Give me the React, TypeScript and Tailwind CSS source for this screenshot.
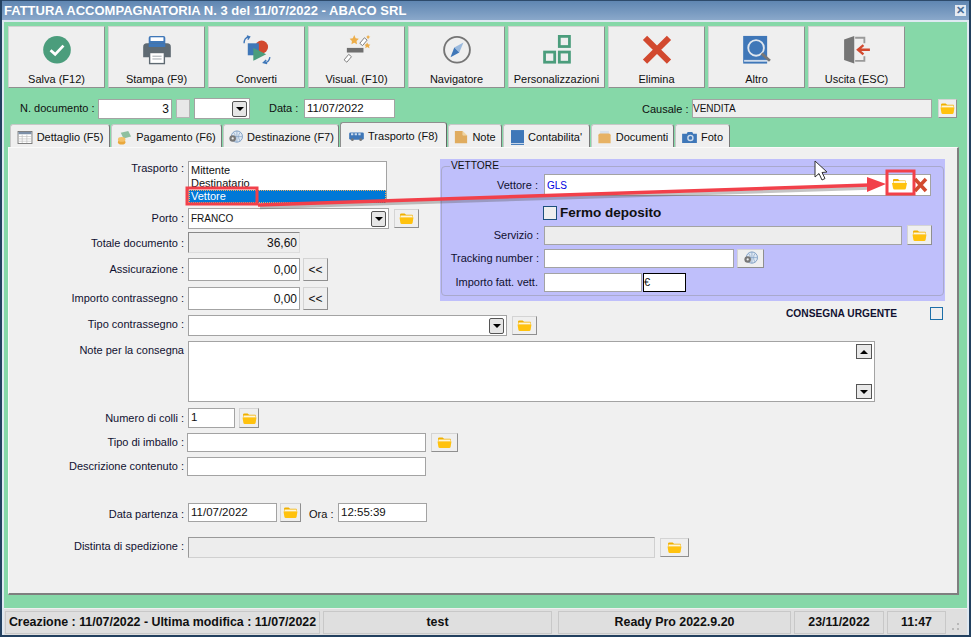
import React from 'react';

const Folder = ({ className = '' }: { className?: string }) => (
  <svg viewBox="0 0 16 14" className={`w-[15px] h-[13px] ${className}`}>
    <path d="M1 3 Q1 1.5 2.5 1.5 H6 L7.5 3 H14 Q15 3 15 4.5 V6 H1 Z" fill="#f0b000" />
    <path d="M1.5 3.8 H14.5 V6 H1.5 Z" fill="#fff6d8" />
    <path d="M.5 6 H15.5 L14.6 11.5 Q14.4 13 13 13 H3 Q1.6 13 1.4 11.5 Z" fill="#ffc20e" />
  </svg>
);

const FolderButton = ({ className = 'w-[25px] h-[19px]' }: { className?: string }) => (
  <button className={`flex items-center justify-center shrink-0 bg-[#efefef] border border-[#d4d4d4] border-r-[#8f8f8f] border-b-[#8f8f8f] ${className}`}>
    <Folder />
  </button>
);

const Field = ({ className = '', children }: { className?: string; children?: React.ReactNode }) => (
  <div className={`flex items-center px-[2px] bg-white border border-[#a3a3a3] overflow-hidden ${className}`}>{children}</div>
);

const ComboArrow = () => (
  <span className="ml-auto flex items-center justify-center w-[15px] h-[16px] shrink-0 rounded-[2px] bg-[#e6e6e6] border border-[#555]">
    <span className="w-0 h-0 border-x-[4px] border-x-transparent border-t-[4px] border-t-black" />
  </span>
);

const Row = ({ label, className = '', labelClass = '', children }: { label: string; className?: string; labelClass?: string; children?: React.ReactNode }) => (
  <div className={`flex items-center ${className}`}>
    <span className={`w-[176px] shrink-0 text-right text-[#101030] pr-[1px] whitespace-nowrap ${labelClass}`}>{label}</span>
    <div className="ml-[3px] flex items-center">{children}</div>
  </div>
);

const MoreButton = () => (
  <button className="ml-[3px] w-[25px] h-[23px] bg-[#efefef] border border-[#d4d4d4] border-r-[#8f8f8f] border-b-[#8f8f8f] text-[12px]">&lt;&lt;</button>
);

const toolbar: { label: string; icon: React.ReactNode }[] = [
  {
    label: 'Salva (F12)',
    icon: (
      <svg viewBox="0 0 32 32" className="w-[32px] h-[32px]">
        <circle cx="16" cy="16" r="15" fill="#4b9d7c" />
        <path d="M9 16.5 L14 21 L23 11.5" fill="none" stroke="#fff" strokeWidth="3" />
      </svg>
    ),
  },
  {
    label: 'Stampa (F9)',
    icon: (
      <svg viewBox="0 0 32 32" className="w-[32px] h-[32px]">
        <path d="M7 11 V3 Q7 1 9 1 H23 Q25 1 25 3 V11 Z" fill="#3f77b8" />
        <rect x="9" y="2.5" width="14" height="4" fill="#fff" />
        <path d="M1 13 Q1 9 5 9 H27 Q31 9 31 13 V24 H1 Z" fill="#5f6a72" />
        <rect x="7" y="9" width="18" height="4" fill="#3f77b8" />
        <rect x="8" y="19" width="16" height="12" fill="#fff" stroke="#5f6a72" strokeWidth="1.5" />
        <path d="M11 23 H21 M11 26 H21" stroke="#9aa2a8" strokeWidth="1" />
      </svg>
    ),
  },
  {
    label: 'Converti',
    icon: (
      <svg viewBox="0 0 32 32" className="w-[32px] h-[32px]">
        <circle cx="21" cy="13" r="7" fill="#d2492f" />
        <rect x="6" y="9" width="12" height="13" fill="#3f77b8" />
        <path d="M12 14 L26 21 L12 28 Z" fill="#4b9d7c" />
        <path d="M2 9 Q2 3 7 2 M5 1 L8 2 L6 5" fill="none" stroke="#3f77b8" strokeWidth="1.5" />
        <path d="M30 24 Q29 30 24 30 M26 27 L23 30 L27 31" fill="none" stroke="#3f77b8" strokeWidth="1.5" />
      </svg>
    ),
  },
  {
    label: 'Visual. (F10)',
    icon: (
      <svg viewBox="0 0 32 32" className="w-[32px] h-[32px]">
        <rect x="5" y="14" width="18" height="5" fill="#6f6f6f" />
        <path d="M19 9 L24 3 L27 5.5 L22 11.5 Z M2 27 L7 21 L10 23.5 L5 29.5 Z" fill="#fff" stroke="#777" strokeWidth="1" />
        <path d="M13 0 L14.5 3.5 L18 4 L15.5 6.5 L16 10 L13 8.5 L10 10 L10.5 6.5 L8 4 L11.5 3.5 Z" fill="#edae4a" />
        <path d="M27 8 L28 10 L30.5 10.5 L29 12 L29.5 14.5 L27 13 L25 14.5 L25.5 12 L24 10.5 L26 10 Z" fill="#edae4a" />
        <path d="M28 0 L29 1.5 L30.5 2 L29 3 L28 4.5 L27 3 L26 2 L27 1.5 Z" fill="#edae4a" />
      </svg>
    ),
  },
  {
    label: 'Navigatore',
    icon: (
      <svg viewBox="0 0 32 32" className="w-[32px] h-[32px]">
        <circle cx="16" cy="16" r="14" fill="none" stroke="#757575" strokeWidth="2" />
        <path d="M23 8 L18.5 19 L13 13.5 Z" fill="#9ab9dd" />
        <path d="M9 24 L13 13.5 L18.5 19 Z" fill="#3f77b8" />
      </svg>
    ),
  },
  {
    label: 'Personalizzazioni',
    icon: (
      <svg viewBox="0 0 32 32" className="w-[32px] h-[32px]" fill="none" stroke="#4b9d7c" strokeWidth="3">
        <rect x="18.5" y="1.5" width="11" height="11" />
        <rect x="2.5" y="18.5" width="11" height="11" />
        <rect x="18.5" y="18.5" width="11" height="11" />
      </svg>
    ),
  },
  {
    label: 'Elimina',
    icon: (
      <svg viewBox="0 0 32 32" className="w-[32px] h-[32px]">
        <path d="M3 3 L29 29 M29 3 L3 29" stroke="#d2492f" strokeWidth="6.5" />
      </svg>
    ),
  },
  {
    label: 'Altro',
    icon: (
      <svg viewBox="0 0 32 32" className="w-[32px] h-[32px]">
        <rect x="1" y="1" width="26" height="30" fill="#3f77b8" />
        <rect x="2" y="27" width="25" height="2" fill="#cfdcec" />
        <circle cx="15" cy="14" r="8.5" fill="#3f77b8" stroke="#dfe6ee" strokeWidth="2" />
        <path d="M21 20 L30 28" stroke="#777" strokeWidth="3" />
      </svg>
    ),
  },
  {
    label: 'Uscita (ESC)',
    icon: (
      <svg viewBox="0 0 32 32" className="w-[32px] h-[32px]">
        <path d="M14 3 H24 V9 M24 23 V28 H14" fill="none" stroke="#9a9a9a" strokeWidth="2" />
        <path d="M2 5 L13 1 V31 L2 27 Z" fill="#757575" />
        <path d="M30 16 H17 M23 11 L17 16 L23 21" fill="none" stroke="#d2492f" strokeWidth="2.5" />
      </svg>
    ),
  },
];

const Globe = () => (
  <svg viewBox="0 0 16 16" className="w-[15px] h-[15px]">
    <circle cx="9.5" cy="7" r="6" fill="#dfe8f2" stroke="#7f9fc4" />
    <path d="M3.5 7 H15.5 M9.5 1 V13 M6 2.5 Q9.5 7 6 12 M13 2.5 Q9.5 7 13 12" stroke="#7f9fc4" strokeWidth=".7" fill="none" />
    <circle cx="5" cy="9" r="3.5" fill="#777" />
    <circle cx="5" cy="9" r="1.2" fill="#eee" />
  </svg>
);

const tabs: { label: string; width: string; active?: boolean; icon: React.ReactNode }[] = [
  {
    label: 'Dettaglio (F5)',
    width: 'w-[100px]',
    icon: (
      <svg viewBox="0 0 16 14" className="w-[16px] h-[13px]">
        <rect x=".5" y=".5" width="15" height="13" fill="#fff" stroke="#777" />
        <rect x="1" y="1" width="14" height="2.5" fill="#7c8fa8" />
        <path d="M1 6 H15 M1 8.5 H15 M1 11 H15 M5 4 V13 M10 4 V13" stroke="#bbb" strokeWidth=".7" />
      </svg>
    ),
  },
  {
    label: 'Pagamento (F6)',
    width: 'w-[111px]',
    icon: (
      <svg viewBox="0 0 16 16" className="w-[15px] h-[15px]">
        <path d="M4 3 L12 1 L15 7 L7 9 Z" fill="#8fbf9f" />
        <ellipse cx="5" cy="13" rx="4" ry="2.5" fill="#eaa83c" />
        <ellipse cx="5" cy="10" rx="4" ry="2.5" fill="#f3c169" />
      </svg>
    ),
  },
  {
    label: 'Destinazione (F7)',
    width: 'w-[116px]',
    icon: <Globe />,
  },
  {
    label: 'Trasporto (F8)',
    width: 'w-[107px]',
    active: true,
    icon: (
      <svg viewBox="0 0 16 12" className="w-[15px] h-[11px]">
        <rect x="0" y="1.5" width="16" height="8" rx="1.5" fill="#3f77b8" />
        <path d="M2 3.5 H4.5 M6 3.5 H8.5 M10 3.5 H12.5" stroke="#cfdcec" strokeWidth="2" />
        <circle cx="3.5" cy="9.5" r="1.5" fill="#777" />
        <circle cx="12.5" cy="9.5" r="1.5" fill="#777" />
      </svg>
    ),
  },
  {
    label: 'Note',
    width: 'w-[54px]',
    icon: (
      <svg viewBox="0 0 16 16" className="w-[14px] h-[14px]">
        <path d="M1 1 H10 V6 H15 V15 H1 Z" fill="#e0ac5f" />
        <path d="M10 1 L15 6 H10 Z" fill="#f0d4a0" />
      </svg>
    ),
  },
  {
    label: "Contabilita'",
    width: 'w-[87px]',
    icon: (
      <svg viewBox="0 0 14 16" className="w-[13px] h-[15px]">
        <rect x="0" y="0" width="14" height="16" fill="#3f77b8" />
        <rect x="0" y="14" width="14" height="1" fill="#cfdcec" />
      </svg>
    ),
  },
  {
    label: 'Documenti',
    width: 'w-[83px]',
    icon: (
      <svg viewBox="0 0 16 16" className="w-[15px] h-[14px]">
        <path d="M3 1 H13 V7 H3 Z" fill="#d9e1ea" />
        <path d="M1 6 Q1 4 3 4 H13 Q15 4 15 6 V15 H1 Z" fill="#e7b264" />
      </svg>
    ),
  },
  {
    label: 'Foto',
    width: 'w-[55px]',
    icon: (
      <svg viewBox="0 0 16 13" className="w-[15px] h-[12px]">
        <path d="M0 3 H5 L6 1 H11 L12 3 H16 V13 H0 Z" fill="#3f77b8" />
        <circle cx="9" cy="7.5" r="3.5" fill="#cfdcec" />
        <circle cx="9" cy="7.5" r="2" fill="#3f77b8" />
      </svg>
    ),
  },
];

const statusCell = 'flex items-center justify-center h-[23px] border border-[#c8c8c8] font-bold text-[#101010] whitespace-nowrap';

export default function App() {
  return (
    <div className="relative w-[971px] h-[637px] overflow-hidden bg-[#86d8a8] border-x-[2px] border-b-[2px] border-[#22405f] text-[11px] text-[#101010] font-['Liberation_Sans',Arial,sans-serif]">
      {/* title bar */}
      <div className="flex items-center justify-between h-[22px] pl-[2px] pr-[3px] bg-gradient-to-b from-[#5f86b2] to-[#8aa8ca] border-t border-[#2d4a6b] border-b-[2px] border-b-[#dfe9f2] text-white font-bold text-[13px]">
        <span>FATTURA ACCOMPAGNATORIA N. 3 del 11/07/2022 - ABACO SRL</span>
        <span className="flex items-center justify-center w-[11px] h-[11px] bg-white/80 text-[#466c97] text-[11px] leading-none">✕</span>
      </div>

      <div className="border-x-[2px] border-[#dfe9f2]">
        {/* toolbar */}
        <div className="flex gap-[3px] pt-[4px] pl-[4px]">
          {toolbar.map((b) => (
            <button key={b.label} className="flex flex-col items-center w-[97px] h-[62px] pt-[8px] bg-[#efefef] border border-[#d2d2d2] border-r-[#8f8f8f] border-b-[#8f8f8f]">
              {b.icon}
              <span className="mt-[6px] whitespace-nowrap">{b.label}</span>
            </button>
          ))}
        </div>

        {/* document row */}
        <div className="flex items-center h-[21px] mt-[10px] pl-[16px]">
          <span className="w-[74px] whitespace-nowrap">N. documento :</span>
          <Field className="ml-[4px] w-[74px] h-[20px] justify-end text-[12px]">3</Field>
          <div className="ml-[4px] w-[14px] h-[19px] bg-[#e8e8e8] border border-[#b5b5b5]" />
          <Field className="ml-[4px] w-[56px] h-[21px]"><ComboArrow /></Field>
          <span className="ml-[19px] w-[33px] whitespace-nowrap">Data :</span>
          <Field className="ml-[2px] w-[91px] h-[19px] text-[11.5px]">11/07/2022</Field>
          <span className="ml-[247px] w-[48px] pt-[2px] whitespace-nowrap">Causale :</span>
          <Field className="ml-[2px] w-[240px] h-[19px] !bg-[#efefef] !px-0 text-[10px]">VENDITA</Field>
          <FolderButton className="ml-[6px] w-[19px] h-[19px]" />
        </div>

        {/* tabs */}
        <div className="flex items-end gap-[1px] h-[25px] mt-[3px] pl-[6px]">
          {tabs.map((t) => (
            <div
              key={t.label}
              className={`flex items-center justify-center gap-[4px] pt-[2px] rounded-t-[3px] border-x border-t whitespace-nowrap ${t.width} ${
                t.active
                  ? 'h-[25px] bg-[#f0f0f0] border-[#8f8f8f] border-r-[#666]'
                  : 'h-[23px] bg-[#efefef] border-[#c8c8c8] border-r-[#777]'
              }`}
            >
              {t.icon}
              <span>{t.label}</span>
            </div>
          ))}
        </div>

        {/* tab page */}
        <div className="ml-[4px] w-[951px] h-[448px] bg-[#f0f0f0] border-l border-t border-[#fafafa] border-r-[2px] border-r-[#7f7f7f] border-b-[2px] border-b-[#7f7f7f] pt-[11px]">
          <div className="flex h-[151px]">
            <div className="w-[431px] shrink-0 pt-[2px]">
              <div className="flex items-start">
                <span className="w-[176px] -mt-[1px] text-right pr-[1px] text-[#101030]">Trasporto :</span>
                <div className="ml-[3px] w-[199px] h-[41px] bg-white border border-[#a3a3a3] leading-[13px] pt-[2px]">
                  <div className="px-[2px]">Mittente</div>
                  <div className="px-[2px]">Destinatario</div>
                  <div className="px-[2px] bg-[#0078d7] text-white outline-1 outline-dotted outline-[#f0b060] -outline-offset-1">Vettore</div>
                </div>
              </div>
              <Row label="Porto :" className="mt-[6px]">
                <Field className="w-[201px] h-[21px] text-[10px]">FRANCO<ComboArrow /></Field>
                <FolderButton className="ml-[5px] w-[25px] h-[19px]" />
              </Row>
              <Row label="Totale documento :" labelClass="pt-[2px]" className="mt-[3px]">
                <Field className="w-[112px] h-[21px] justify-end !bg-[#ededed] border-t-[#888] border-l-[#888] border-r-[#ddd] border-b-[#ddd] text-[12px]">36,60</Field>
              </Row>
              <Row label="Assicurazione :" className="mt-[5px]">
                <Field className="w-[112px] h-[23px] justify-end text-[12px]">0,00</Field>
                <MoreButton />
              </Row>
              <Row label="Importo contrassegno :" className="mt-[6px]">
                <Field className="w-[112px] h-[23px] justify-end text-[12px]">0,00</Field>
                <MoreButton />
              </Row>
            </div>

            <div className="w-[505px] shrink-0">
              <div className="h-[142px] bg-[#bfbffb] pt-[1px] px-[1px]">
                <fieldset className="h-[136px] border border-[#a9a9cc] rounded-[4px] pl-[8px]">
                  <legend className="px-[1px] leading-[12px] text-[10.2px]">VETTORE</legend>
                  <div className="flex items-center mt-[2px]">
                    <span className="w-[88px] text-right text-[#101030]">Vettore :</span>
                    <Field className="ml-[6px] w-[387px] h-[22px] text-[#0000e0] text-[10px]">GLS</Field>
                  </div>
                  <div className="flex items-center mt-[10px] ml-[95px] -translate-x-[2px]">
                    <span className="w-[14px] h-[14px] bg-[#efefef] border border-[#1d4f7c]" />
                    <span className="ml-[3px] font-bold text-[13.5px] leading-[14px]">Fermo deposito</span>
                  </div>
                  <div className="flex items-center mt-[5px]">
                    <span className="w-[89px] text-right text-[#101030]">Servizio :</span>
                    <Field className="ml-[5px] w-[358px] h-[19px] !bg-[#ededed]" />
                    <FolderButton className="ml-[5px] w-[25px] h-[20px]" />
                  </div>
                  <div className="flex items-center mt-[4px]">
                    <span className="w-[89px] text-right text-[#101030] whitespace-nowrap">Tracking number :</span>
                    <Field className="ml-[5px] w-[190px] h-[19px]" />
                    <button className="ml-[3px] flex items-center justify-center w-[27px] h-[19px] bg-[#efefef] border border-[#d4d4d4] border-r-[#8f8f8f] border-b-[#8f8f8f]">
                      <Globe />
                    </button>
                  </div>
                  <div className="flex items-center mt-[5px]">
                    <span className="w-[88px] text-right text-[#101030] whitespace-nowrap">Importo fatt. vett.</span>
                    <Field className="ml-[6px] w-[98px] h-[19px]" />
                    <Field className="ml-[1px] w-[43px] h-[19px] !border-black !px-0">€</Field>
                  </div>
                </fieldset>
              </div>
              <div className="flex items-center mt-[5px] h-[14px]">
                <span className="ml-[346px] pt-[2px] font-bold text-[10.2px] text-[#101030] whitespace-nowrap">CONSEGNA URGENTE</span>
                <span className="ml-auto mr-[2px] w-[13px] h-[13px] bg-[#efefef] border border-[#1d6fa8]" />
              </div>
            </div>
          </div>

          <Row label="Tipo contrassegno :" labelClass="pb-[2px]" className="mt-[5px]">
            <Field className="w-[319px] h-[21px]"><ComboArrow /></Field>
            <FolderButton className="ml-[5px] w-[25px] h-[19px]" />
          </Row>
          <div className="flex items-start mt-[5px]">
            <span className="w-[176px] pt-[1px] text-right pr-[1px] text-[#101030]">Note per la consegna</span>
            <div className="ml-[3px] flex flex-col justify-between w-[687px] h-[61px] p-[2px] bg-white border border-[#a3a3a3] items-end">
              <span className="flex items-center justify-center w-[16px] h-[15px] bg-[#e8e8e8] border border-[#555]">
                <span className="w-0 h-0 border-x-[4px] border-x-transparent border-b-[4px] border-b-black" />
              </span>
              <span className="flex items-center justify-center w-[16px] h-[15px] bg-[#e8e8e8] border border-[#555]">
                <span className="w-0 h-0 border-x-[4px] border-x-transparent border-t-[4px] border-t-black" />
              </span>
            </div>
          </div>
          <Row label="Numero di colli :" className="mt-[6px]">
            <Field className="w-[47px] h-[20px] text-[11.5px]">1</Field>
            <FolderButton className="ml-[4px] w-[20px] h-[20px]" />
          </Row>
          <Row label="Tipo di imballo :" className="mt-[5px]">
            <Field className="-ml-[1px] w-[239px] h-[19px]" />
            <FolderButton className="ml-[5px] w-[27px] h-[19px]" />
          </Row>
          <Row label="Descrizione contenuto :" className="mt-[5px]">
            <Field className="-ml-[1px] w-[239px] h-[19px]" />
          </Row>
          <Row label="Data partenza :" labelClass="pt-[4px]" className="mt-[26px]">
            <Field className="w-[89px] h-[19px] text-[11.5px]">11/07/2022</Field>
            <FolderButton className="ml-[3px] w-[21px] h-[19px]" />
            <span className="ml-[8px] w-[27px] pt-[4px] whitespace-nowrap">Ora :</span>
            <Field className="ml-[2px] w-[89px] h-[19px] text-[11.5px]">12:55:39</Field>
          </Row>
          <Row label="Distinta di spedizione :" labelClass="pb-[2px]" className="mt-[14px]">
            <Field className="w-[467px] h-[21px] !bg-[#ededed] border-t-[#999] border-l-[#999] border-r-[#d0d0d0] border-b-[#d0d0d0]" />
            <FolderButton className="ml-[5px] w-[29px] h-[19px]" />
          </Row>
        </div>

        {/* status bar */}
        <div className="flex items-center gap-[3px] h-[27px] mt-[13px] pl-[1px] bg-[#dfdfdf] border-t border-[#efefef] text-[12.4px]">
          <div className={`${statusCell} w-[315px]`}>Creazione : 11/07/2022 - Ultima modifica : 11/07/2022</div>
          <div className={`${statusCell} w-[229px]`}>test</div>
          <div className={`${statusCell} w-[233px] ml-[3px]`}>Ready Pro 2022.9.20</div>
          <div className={`${statusCell} w-[90px]`}>23/11/2022</div>
          <div className={`${statusCell} w-[59px]`}>11:47</div>
          <svg viewBox="0 0 10 10" className="w-[10px] h-[10px] ml-[1px] mt-[10px]">
            <path d="M7 1 h2 v2 h-2 Z M2 6 h2 v2 h-2 Z M7 6 h2 v2 h-2 Z" fill="#b8b8b8" />
          </svg>
        </div>
      </div>

      {/* callout drawn over the form */}
      <svg className="absolute left-[-2px] top-0 w-[971px] h-[637px] pointer-events-none" viewBox="0 0 971 637">
        <path d="M260 207.5 L870 188" stroke="#555" strokeOpacity=".35" strokeWidth="3.5" />
        <path d="M258 205 L870 185" stroke="#f2404a" strokeWidth="3.5" />
        <rect x="187" y="188" width="70" height="16" fill="none" stroke="#f2404a" strokeWidth="3" />
        <path d="M886 184 L867 177 L867 192 Z" fill="#f2404a" />
        <rect x="887" y="171" width="27" height="23" fill="none" stroke="#f2404a" strokeWidth="3" />
        <g transform="translate(892 178)">
          <path d="M1 2 Q1 1 2 1 H6 L7.5 2.5 H13 Q14 2.5 14 3.5 V5 H1 Z" fill="#f0b000" />
          <path d="M1.5 3 H13.5 V5 H1.5 Z" fill="#fff6d8" />
          <path d="M0 5 H15 L14 10 Q13.8 11.5 12.5 11.5 H2.5 Q1.2 11.5 1 10 Z" fill="#ffc20e" />
        </g>
        <path d="M915 179 L926 191 M926 179 L915 191" stroke="#d2492f" strokeWidth="3.5" />
        <path d="M815 161 V177 L819 173.5 L822 180 L825 178.5 L822 172.5 L827 172 Z" fill="#fff" stroke="#333" strokeWidth="1" />
      </svg>
    </div>
  );
}
